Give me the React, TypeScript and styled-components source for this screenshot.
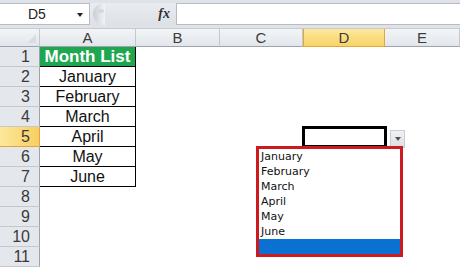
import React from "react";
import styled, { createGlobalStyle } from "styled-components";

const GlobalStyle = createGlobalStyle`
  html, body {
    margin: 0;
    padding: 0;
    background: #fff;
    overflow: hidden;
  }
  body {
    font-family: "Liberation Sans", Arial, sans-serif;
  }
`;

const Page = styled.div`
  width: 460px;
  height: 269px;
  overflow: hidden;
  background: #fff;
`;

const FormulaBar = styled.div`
  display: flex;
  height: 29px;
  background: #dfe3e8;
  box-sizing: border-box;
  padding-top: 3px;
  padding-bottom: 3px;
  border-bottom: 1px solid #c6cbd2;
`;

const NameBox = styled.div`
  width: 90px;
  display: flex;
  align-items: center;
  background: #fff;
  border: 1px solid #b8bdc5;
  border-left: none;
  box-sizing: border-box;
  padding-left: 28px;
  font-size: 14px;
  color: #222;
  position: relative;
`;

const NameArrow = styled.span`
  position: absolute;
  right: 6px;
  top: 9px;
  width: 0;
  height: 0;
  border-left: 3px solid transparent;
  border-right: 3px solid transparent;
  border-top: 4px solid #222;
`;

const Handle = styled.div`
  width: 86px;
  display: flex;
  align-items: center;
  justify-content: space-between;
  padding: 0 6px 0 3px;
  box-sizing: border-box;
  background: linear-gradient(#e9ecf0, #dde1e6);
`;

const Knob = styled.div`
  width: 12px;
  height: 22px;
  border-radius: 11px 0 0 11px;
  background: linear-gradient(90deg, #c9ced5, #f2f4f6);
  position: relative;
  &::after {
    content: "";
    position: absolute;
    left: 5px;
    top: 6px;
    width: 6px;
    height: 4px;
    border-radius: 3px;
    background: #d4d8de;
  }
`;

const Fx = styled.span`
  font-family: "Liberation Serif", "Times New Roman", serif;
  font-style: italic;
  font-weight: bold;
  font-size: 14px;
  color: #333;
`;

const FormulaInput = styled.div`
  flex: 1;
  background: #fff;
  border: 1px solid #b8bdc5;
  border-right: none;
`;

const Sheet = styled.div`
  display: grid;
  grid-template-columns: 40px 96px 84px 83px 82px 75px;
  grid-template-rows: 18px repeat(11, 20px);
  position: relative;
`;

const ColHead = styled.div<{ $active?: boolean }>`
  display: flex;
  align-items: center;
  justify-content: center;
  font-size: 15px;
  color: #3c3c3c;
  box-sizing: border-box;
  background: ${(p) =>
    p.$active
      ? "linear-gradient(#fde89a, #f8d36a)"
      : "linear-gradient(#f3f5f7, #e2e6eb)"};
  border-right: 1px solid ${(p) => (p.$active ? "#e2a73b" : "#c3c8ce")};
  border-bottom: 1px solid ${(p) => (p.$active ? "#e2a73b" : "#9ba3ad")};
  border-left: ${(p) => (p.$active ? "1px solid #e2a73b" : "none")};
`;

const Corner = styled.div`
  background: linear-gradient(#f3f5f7, #e2e6eb);
  border-right: 1px solid #c3c8ce;
  border-bottom: 1px solid #9ba3ad;
  box-sizing: border-box;
  position: relative;
  &::after {
    content: "";
    position: absolute;
    right: 3px;
    bottom: 3px;
    width: 0;
    height: 0;
    border-left: 9px solid transparent;
    border-bottom: 9px solid #d9dde2;
  }
`;

const RowHead = styled.div<{ $active?: boolean }>`
  display: flex;
  align-items: center;
  justify-content: flex-end;
  padding-right: 9px;
  font-size: 16px;
  color: #3a3a3a;
  box-sizing: border-box;
  background: ${(p) =>
    p.$active ? "linear-gradient(90deg, #fde89a, #f7cf63)" : "#e4e8ed"};
  border-right: 1px solid ${(p) => (p.$active ? "#e2a73b" : "#9ba3ad")};
  border-bottom: 1px solid ${(p) => (p.$active ? "#e2a73b" : "#c3c8ce")};
`;

const ListCell = styled.div<{ $head?: boolean }>`
  display: flex;
  align-items: center;
  justify-content: center;
  box-sizing: border-box;
  border-right: 1px solid #000;
  border-bottom: 1px solid #000;
  background: ${(p) => (p.$head ? "#1fa750" : "#fff")};
  color: ${(p) => (p.$head ? "#fff" : "#111")};
  font-weight: ${(p) => (p.$head ? "bold" : "normal")};
  font-size: ${(p) => (p.$head ? "17px" : "16px")};
`;

const Cell = styled.div`
  background: #fff;
`;

const ActiveCell = styled.div`
  grid-column: 5;
  grid-row: 6;
  margin: -1px 0 0 -1px;
  border: 3px solid #000;
  box-sizing: border-box;
  width: 85px;
  height: 22px;
  position: relative;
`;

const DropButton = styled.div`
  position: absolute;
  left: 85px;
  top: 1px;
  width: 15px;
  height: 18px;
  box-sizing: border-box;
  border: 1px solid #c9cdd2;
  background: linear-gradient(#f1f2f4, #dcdfe3);
  display: flex;
  align-items: center;
  justify-content: center;
  &::after {
    content: "";
    width: 0;
    height: 0;
    border-left: 3px solid transparent;
    border-right: 3px solid transparent;
    border-top: 4px solid #555;
  }
`;

const DropList = styled.div`
  position: absolute;
  left: 256px;
  top: 117px;
  width: 147px;
  height: 111px;
  box-sizing: border-box;
  border: 3px solid #cc1a1f;
  background: #fff;
  display: flex;
  flex-direction: column;
  font-family: "DejaVu Sans", Tahoma, sans-serif;
  font-size: 11px;
  color: #111;
`;

const DropItem = styled.div<{ $selected?: boolean }>`
  height: 15px;
  line-height: 15px;
  padding-left: 2px;
  background: ${(p) => (p.$selected ? "#0a70d2" : "transparent")};
`;

const months = ["January", "February", "March", "April", "May", "June"];
const cols = ["A", "B", "C", "D", "E"];

export default function App() {
  const rows = Array.from({ length: 11 }, (_, i) => i + 1);
  return (
    <Page>
      <GlobalStyle />
      <FormulaBar>
        <NameBox>
          D5
          <NameArrow />
        </NameBox>
        <Handle>
          <Knob />
          <Fx>fx</Fx>
        </Handle>
        <FormulaInput />
      </FormulaBar>
      <Sheet>
        <Corner />
        {cols.map((c) => (
          <ColHead key={c} $active={c === "D"}>
            {c}
          </ColHead>
        ))}
        {rows.map((r) => (
          <React.Fragment key={r}>
            <RowHead $active={r === 5}>{r}</RowHead>
            {r === 1 ? (
              <ListCell $head>Month List</ListCell>
            ) : r <= 7 ? (
              <ListCell>{months[r - 2]}</ListCell>
            ) : (
              <Cell />
            )}
            <Cell />
            <Cell />
            {r === 5 ? (
              <ActiveCell>
                <DropButton />
              </ActiveCell>
            ) : (
              <Cell />
            )}
            <Cell />
          </React.Fragment>
        ))}
        <DropList>
          {months.map((m) => (
            <DropItem key={m}>{m}</DropItem>
          ))}
          <DropItem $selected>&nbsp;</DropItem>
        </DropList>
      </Sheet>
    </Page>
  );
}
